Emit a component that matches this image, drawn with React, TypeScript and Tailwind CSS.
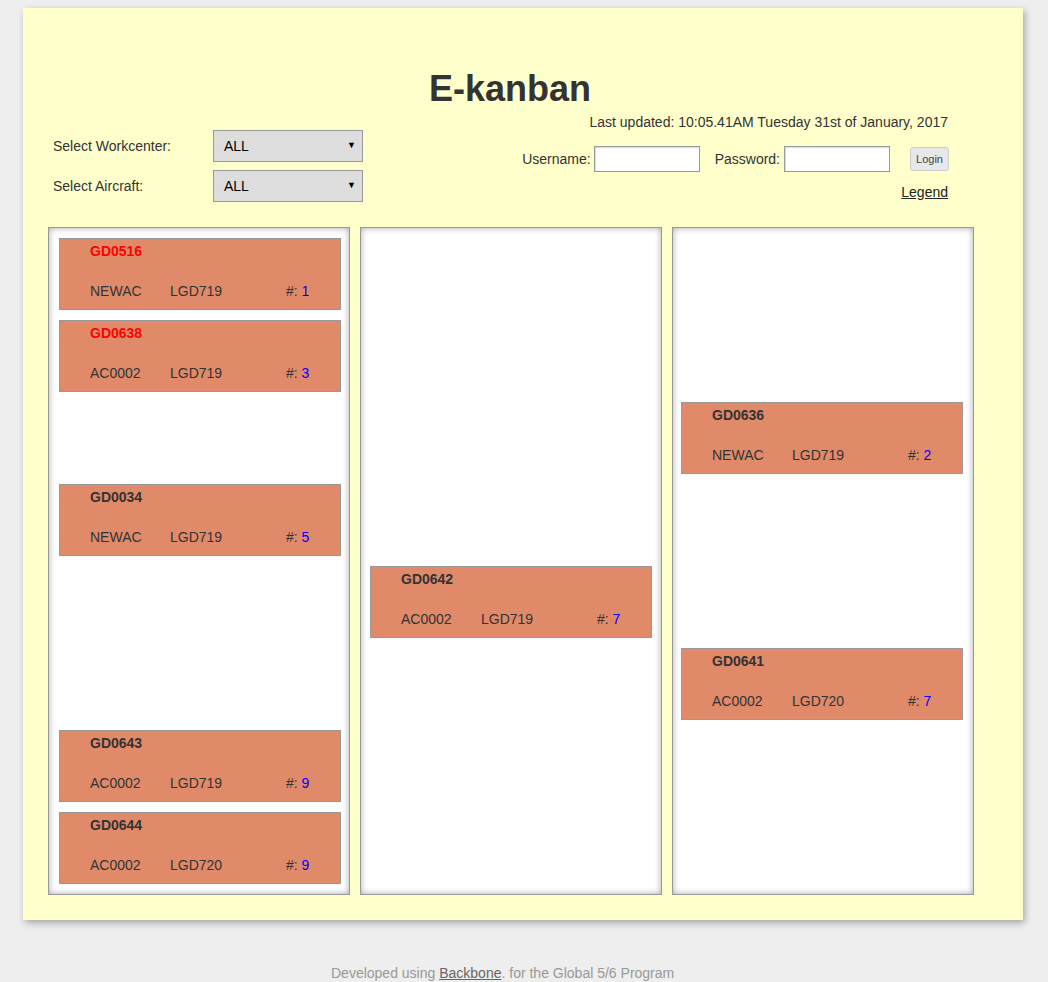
import React from "react";

type Card = { id: string; ac: string; lgd: string; n: number; red?: boolean };

const columns: (Card | null)[][] = [
  [
    { id: "GD0516", ac: "NEWAC", lgd: "LGD719", n: 1, red: true },
    { id: "GD0638", ac: "AC0002", lgd: "LGD719", n: 3, red: true },
    null,
    { id: "GD0034", ac: "NEWAC", lgd: "LGD719", n: 5 },
    null,
    null,
    { id: "GD0643", ac: "AC0002", lgd: "LGD719", n: 9 },
    { id: "GD0644", ac: "AC0002", lgd: "LGD720", n: 9 },
  ],
  [null, null, null, null, { id: "GD0642", ac: "AC0002", lgd: "LGD719", n: 7 }, null, null, null],
  [
    null,
    null,
    { id: "GD0636", ac: "NEWAC", lgd: "LGD719", n: 2 },
    null,
    null,
    { id: "GD0641", ac: "AC0002", lgd: "LGD720", n: 7 },
    null,
    null,
  ],
];

const colPad = ["pl-[10px]", "pl-[9px]", "pl-[8px]"];

function KCard({ c }: { c: Card | null }) {
  if (!c) return <div className="h-[72px] w-[282px] shrink-0" />;
  return (
    <div className="h-[72px] w-[282px] shrink-0 border border-[#999] bg-[#e08a6a] pl-[30px] pt-[3px] text-[14px]">
      <div className={"h-[18px] leading-[18px] font-bold " + (c.red ? "text-[#ff0000]" : "text-[#333]")}>{c.id}</div>
      <div className="mt-[22px] flex h-[18px] leading-[18px] text-[#333]">
        <span className="w-[80px]">{c.ac}</span>
        <span className="w-[116px]">{c.lgd}</span>
        <span>
          #: <span className="text-[#0000ff]">{c.n}</span>
        </span>
      </div>
    </div>
  );
}

function FakeSelect() {
  return (
    <div className="flex h-[32px] w-[150px] items-center justify-between border border-[#999] bg-[#dddddd] pl-[10px] pr-[6px] text-[14px] text-black">
      <span>ALL</span>
      <span className="text-[9px]">▼</span>
    </div>
  );
}

export default function App() {
  return (
    <div
      className="min-h-[982px] bg-[#eeeeee] pt-[8px] text-[#333]"
      style={{ fontFamily: '"Liberation Sans", Arial, sans-serif' }}
    >
      <div className="ml-[23px] w-[1000px] bg-[#ffffcc] pb-[25px] shadow-[2px_3px_7px_rgba(0,0,0,0.3)]">
        <div className="pl-[406px] pt-[61px]">
          <h1 className="h-[40px] text-[36px] font-bold leading-[40px] text-[#333]">E-kanban</h1>
        </div>
        <div className="mt-[4px] flex items-start justify-between pr-[74px] pl-[30px]">
          <div className="mt-[17px] flex flex-col gap-[8px]">
            <div className="flex items-center">
              <span className="w-[160px] text-[14px] leading-[18px]">Select Workcenter:</span>
              <FakeSelect />
            </div>
            <div className="flex items-center">
              <span className="w-[160px] text-[14px] leading-[18px]">Select Aircraft:</span>
              <FakeSelect />
            </div>
          </div>
          <div className="flex flex-col items-end text-[14px]">
            <div className="mr-[1px] h-[18px] leading-[18px]">Last updated: 10:05.41AM Tuesday 31st of January, 2017</div>
            <div className="mt-[15px] flex h-[26px] items-center">
              <span className="mr-[3px]">Username:</span>
              <div className="h-[26px] w-[106px] border border-[#999] bg-white shadow-[inset_1px_1px_1px_rgba(0,0,0,0.15)]" />
              <span className="ml-[15px] mr-[4px]">Password:</span>
              <div className="h-[26px] w-[106px] border border-[#999] bg-white shadow-[inset_1px_1px_1px_rgba(0,0,0,0.15)]" />
              <div className="ml-[20px] flex h-[24px] w-[39px] items-center justify-center rounded-[3px] border border-[#ccc] bg-[#e8e8e8] text-[11px] text-[#444]">
                Login
              </div>
            </div>
            <div className="mt-[11px] mr-[1px] h-[18px] leading-[18px] text-[#222] underline">Legend</div>
          </div>
        </div>
        <div className="mt-[25px] flex gap-[10px] pl-[25px]">
          {columns.map((col, i) => (
            <div
              key={i}
              className={
                "flex h-[668px] w-[302px] flex-col gap-[10px] overflow-visible border border-[#999] bg-white py-[10px] pr-[8px] shadow-[inset_0_0_6px_rgba(0,0,0,0.35)] " +
                colPad[i]
              }
            >
              {col.map((c, j) => (
                <KCard key={j} c={c} />
              ))}
            </div>
          ))}
        </div>
      </div>
      <div className="mt-[44px] pl-[331px] text-[14px] leading-[18px] text-[#999]">
        Developed using <span className="text-[#666] underline">Backbone</span>. for the Global 5/6 Program
      </div>
    </div>
  );
}
